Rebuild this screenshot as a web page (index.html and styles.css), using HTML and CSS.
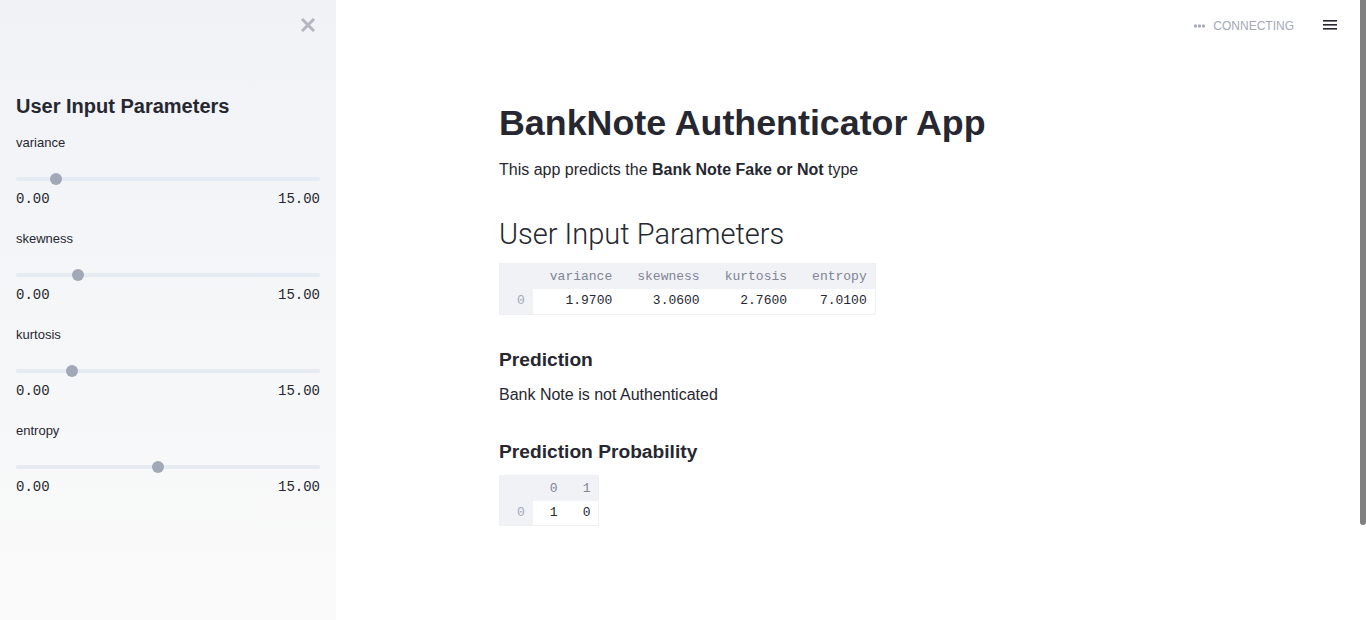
FILE: index.html
```html
<!DOCTYPE html>
<html lang="en">
<head>
<meta charset="utf-8">
<title>BankNote Authenticator App</title>
<link rel="stylesheet" href="styles.css">
</head>
<body>
<div class="app">
  <aside class="sidebar">
    <button class="close-btn" aria-label="Close sidebar">
      <svg width="14" height="14" viewBox="0 0 14 14"><path d="M2 2 L12 12 M12 2 L2 12" stroke="#b3b6be" stroke-width="3" stroke-linecap="square" fill="none"/></svg>
    </button>
    <h3 class="side-title">User Input Parameters</h3>

    <div class="slider">
      <div class="slider-label">variance</div>
      <div class="slider-track-wrap">
        <div class="slider-track"><span class="slider-thumb" style="left: 13.13%"></span></div>
      </div>
      <div class="slider-ticks"><span>0.00</span><span>15.00</span></div>
    </div>

    <div class="slider">
      <div class="slider-label">skewness</div>
      <div class="slider-track-wrap">
        <div class="slider-track"><span class="slider-thumb" style="left: 20.4%"></span></div>
      </div>
      <div class="slider-ticks"><span>0.00</span><span>15.00</span></div>
    </div>

    <div class="slider">
      <div class="slider-label">kurtosis</div>
      <div class="slider-track-wrap">
        <div class="slider-track"><span class="slider-thumb" style="left: 18.4%"></span></div>
      </div>
      <div class="slider-ticks"><span>0.00</span><span>15.00</span></div>
    </div>

    <div class="slider">
      <div class="slider-label">entropy</div>
      <div class="slider-track-wrap">
        <div class="slider-track"><span class="slider-thumb" style="left: 46.73%"></span></div>
      </div>
      <div class="slider-ticks"><span>0.00</span><span>15.00</span></div>
    </div>
  </aside>

  <main class="main">
    <header class="topbar">
      <div class="status">
        <svg width="11" height="4" viewBox="0 0 11 4"><rect x="0" y="0.5" width="3" height="3" rx="1" fill="#a3a8b8"/><rect x="4" y="0.5" width="3" height="3" rx="1" fill="#a3a8b8"/><rect x="8" y="0.5" width="3" height="3" rx="1" fill="#a3a8b8"/></svg>
        <span>CONNECTING</span>
      </div>
      <button class="menu-btn" aria-label="Menu">
        <svg width="14" height="12" viewBox="0 0 14 12"><rect x="0" y="1" width="14" height="1.6" fill="#262730"/><rect x="0" y="5" width="14" height="1.6" fill="#262730"/><rect x="0" y="9" width="14" height="1.6" fill="#262730"/></svg>
      </button>
    </header>

    <section class="block">
      <h1 class="title">BankNote Authenticator App</h1>
      <p class="text lead">This app predicts the <strong>Bank Note Fake or Not</strong> type</p>

      <h2 class="subheader">User Input Parameters</h2>
      <table class="df">
        <thead>
          <tr><th class="idx"></th><th>variance</th><th>skewness</th><th>kurtosis</th><th>entropy</th></tr>
        </thead>
        <tbody>
          <tr><th class="idx">0</th><td>1.9700</td><td>3.0600</td><td>2.7600</td><td>7.0100</td></tr>
        </tbody>
      </table>

      <h3 class="section">Prediction</h3>
      <p class="text">Bank Note is not Authenticated</p>

      <h3 class="section">Prediction Probability</h3>
      <table class="df">
        <thead>
          <tr><th class="idx"></th><th>0</th><th>1</th></tr>
        </thead>
        <tbody>
          <tr><th class="idx">0</th><td>1</td><td>0</td></tr>
        </tbody>
      </table>
    </section>
  </main>
</div>
<div class="scroll-thumb"></div>
</body>
</html>
```

FILE: styles.css
```css
* { box-sizing: border-box; }

html, body {
  margin: 0;
  padding: 0;
  height: 100%;
  overflow: hidden;
  background: #ffffff;
  color: #262730;
  font-family: "Liberation Sans", Arial, sans-serif;
}

.app {
  display: flex;
  height: 100vh;
}

/* Sidebar */
.sidebar {
  position: relative;
  width: 336px;
  flex: 0 0 336px;
  height: 100%;
  padding: 91px 16px 0 16px;
  background-image: linear-gradient(180deg, #f0f2f6 0%, #fafafa 100%);
}

.close-btn {
  position: absolute;
  top: 18px;
  right: 21px;
  width: 14px;
  height: 14px;
  padding: 0;
  border: 0;
  background: none;
  display: block;
}
.close-btn svg { display: block; }

.side-title {
  margin: 0 0 12px 0;
  font-size: 20px;
  line-height: 30px;
  font-weight: 700;
  color: #262730;
}

.slider {
  margin-bottom: 22px;
}

.slider-label {
  font-size: 13px;
  line-height: 20px;
  color: #262730;
}

.slider-track-wrap {
  height: 38px;
  padding-top: 24px;
}

.slider-track {
  position: relative;
  height: 4px;
  border-radius: 2px;
  background: #e6eaf1;
}

.slider-thumb {
  position: absolute;
  top: -4px;
  width: 12px;
  height: 12px;
  margin-left: -6px;
  border-radius: 50%;
  background: #a3a8b8;
}

.slider-ticks {
  display: flex;
  justify-content: space-between;
  font-family: "Liberation Mono", "DejaVu Sans Mono", monospace;
  font-size: 14px;
  line-height: 16px;
  color: #262730;
}

/* Main */
.main {
  flex: 1 1 auto;
  display: flex;
  flex-direction: column;
  padding-right: 6px;
  min-width: 0;
}

.topbar {
  height: 50px;
  display: flex;
  align-items: center;
  justify-content: flex-end;
  padding-right: 23px;
  gap: 29px;
}

.status {
  display: flex;
  align-items: center;
  gap: 8px;
  margin-top: 2px;
  font-size: 12px;
  color: #a3a8b8;
}
.status svg { display: block; }

.menu-btn {
  padding: 0;
  border: 0;
  background: none;
  width: 14px;
  height: 12px;
}
.menu-btn svg { display: block; }

.block {
  width: 100%;
  max-width: 730px;
  margin: 0 auto;
  padding: 46px 16px 0 16px;
}

.title {
  margin: 0;
  font-size: 35.8px;
  line-height: 54px;
  font-weight: 700;
  color: #262730;
}

.text {
  margin: 8px 0 0 0;
  font-size: 16px;
  line-height: 24px;
}
.text strong { font-weight: 700; }

.subheader {
  margin: 31px 0 0 0;
  font-family: Roboto, "Liberation Sans", sans-serif;
  font-weight: 300;
  font-size: 29px;
  line-height: 42px;
  color: #262730;
}

.section {
  margin: 30px 0 0 0;
  font-size: 19.2px;
  line-height: 30px;
  font-weight: 700;
}

/* Dataframe */
.df {
  margin-top: 8px;
  border-collapse: collapse;
  font-family: "Liberation Mono", "DejaVu Sans Mono", monospace;
  font-size: 13px;
  border: 1px solid #eef0f4;
}

.df th, .df td {
  padding: 0 8px 0 17px;
  text-align: right;
  font-weight: 400;
  white-space: nowrap;
}

.df thead th {
  height: 25px;
  line-height: 25px;
  background: #f0f2f6;
  color: #808495;
}

.df tbody td, .df tbody th {
  height: 25px;
  line-height: 24px;
}

.df tbody td {
  background: #ffffff;
  color: #262730;
}

.df th.idx {
  background: #f0f2f6;
  color: #a3a8b8;
}

/* Overlay scrollbar thumb */
.scroll-thumb {
  position: fixed;
  top: 0;
  right: 0;
  width: 6px;
  height: 525px;
  background: #808080;
  border-radius: 0 0 3px 3px;
}
```
